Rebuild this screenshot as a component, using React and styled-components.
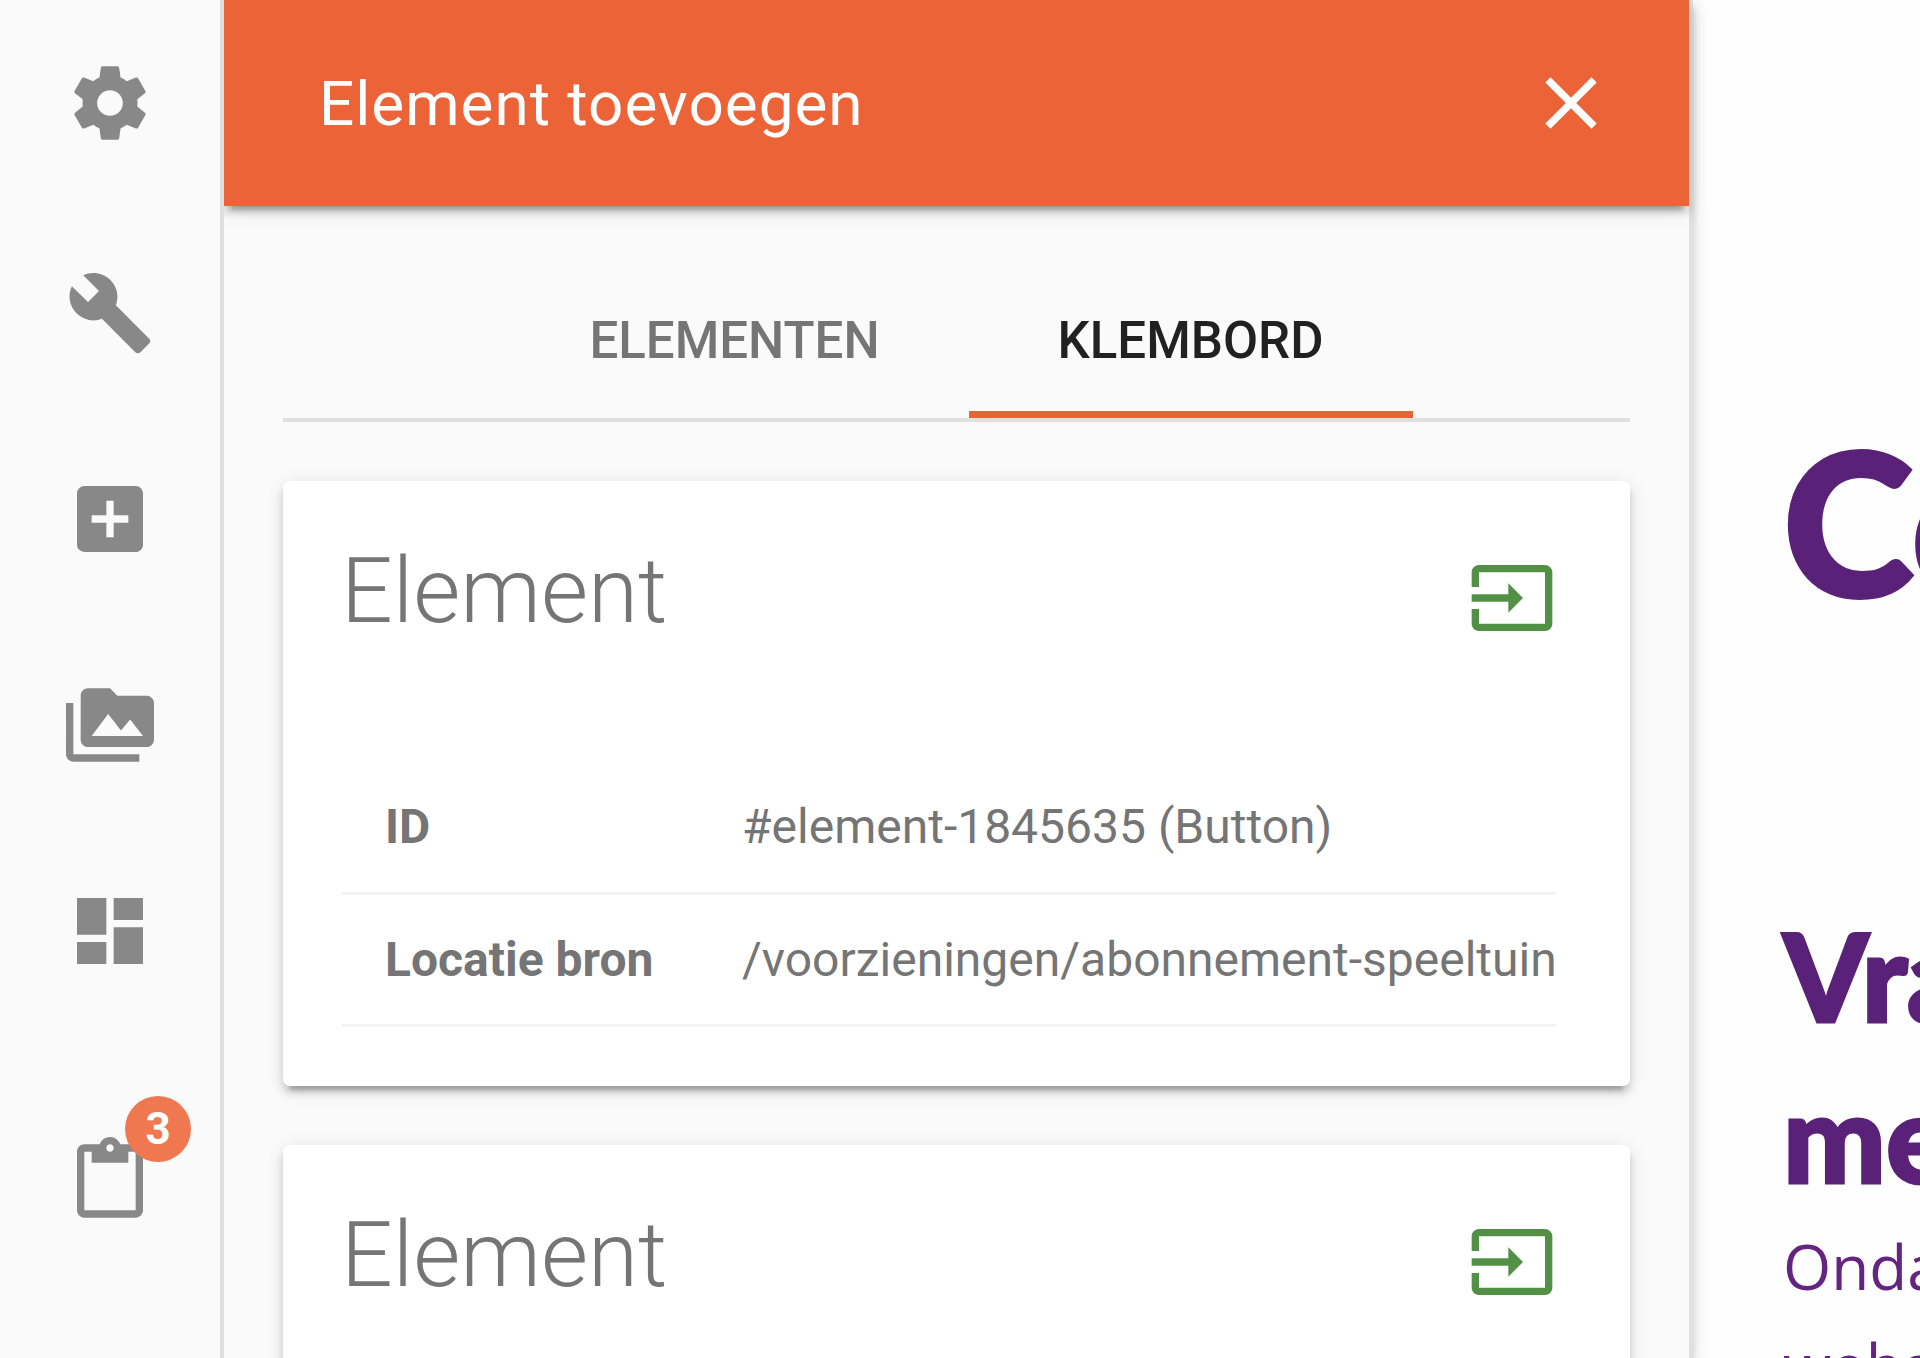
import React, { useState } from 'react';
import styled, { createGlobalStyle } from 'styled-components';
import { MdBuild, MdAddBox, MdPermMedia, MdDashboard, MdContentPaste, MdClose, MdInput } from 'react-icons/md';

const GlobalStyle = createGlobalStyle`
  * {
    box-sizing: border-box;
  }

  html, body, #root {
    height: 100%;
  }

  body {
    margin: 0;
    overflow: hidden;
    font-family: Roboto, sans-serif;
    color: #757575;
    background-color: #fefefe;
  }
`;

const elevation = `
  box-shadow: 0 7px 7px 0 rgba(0, 0, 0, 0.14), 0 11px 4px -7px rgba(0, 0, 0, 0.2), 0 4px 18px 0 rgba(0, 0, 0, 0.12);
`;

const PageContainer = styled.div`
  display: flex;
  height: 100vh;
  overflow: hidden;
`;

const Sidebar = styled.nav`
  display: flex;
  flex-direction: column;
  flex: none;
  width: 224px;
  background-color: #fafafa;
  border-right: 4px solid #e0e0e0;
`;

const SidebarButton = styled.button`
  display: flex;
  align-items: center;
  justify-content: center;
  flex: none;
  height: 206px;
  margin: ${props => props.$margin || '0'};
  padding: 0;
  border: none;
  background: none;
  color: #888;
  font-size: 88px;
  cursor: pointer;
`;

const IconWrapper = styled.span`
  position: relative;
  display: flex;
`;

const Badge = styled.span`
  position: absolute;
  top: -41px;
  right: -37px;
  width: 66px;
  height: 66px;
  border-radius: 50%;
  background-color: #f07850;
  color: white;
  font-family: Roboto, sans-serif;
  font-size: 44px;
  font-weight: bold;
  line-height: 66px;
  text-align: center;
`;

const Panel = styled.section`
  position: relative;
  display: flex;
  flex-direction: column;
  flex: 1;
  min-width: 0;
  background-color: #fafafa;
  border-right: 4px solid #e0e0e0;
  ${elevation}
  clip-path: inset(0 -40px 0 0);
`;

const PanelHeader = styled.header`
  display: flex;
  align-items: center;
  justify-content: space-between;
  flex: none;
  height: 206px;
  padding: 0 74px 0 95px;
  background-color: #ec6337;
  color: white;
  ${elevation}
`;

const PanelTitle = styled.h1`
  margin: 0;
  font-size: 62px;
  font-weight: 400;
  letter-spacing: 1px;
`;

const IconButton = styled.button`
  display: flex;
  padding: 0;
  border: none;
  background: none;
  color: ${props => props.$color};
  font-size: 88px;
  cursor: pointer;
`;

const PanelBody = styled.div`
  display: flex;
  flex-direction: column;
  gap: 59px;
  padding: 37px 59px 0;
`;

const Tabs = styled.div`
  display: flex;
  justify-content: center;
  height: 179px;
  border-bottom: 4px solid #e0e0e0;
`;

const Tab = styled.button`
  padding: 26px 89px 0;
  border: none;
  border-bottom: 7px solid ${props => (props.$active ? '#ec6337' : 'transparent')};
  background: none;
  color: ${props => (props.$active ? '#212121' : '#757575')};
  font-family: Roboto, sans-serif;
  font-size: 51px;
  font-weight: 500;
  text-transform: uppercase;
  cursor: pointer;
`;

const Card = styled.article`
  flex: none;
  height: 605px;
  padding: 59px 74px 59px 58px;
  border-radius: 7px;
  background-color: white;
  ${elevation}
`;

const CardHeader = styled.div`
  display: flex;
  align-items: flex-end;
  justify-content: space-between;
  height: 102px;
  margin-bottom: 119px;
`;

const CardTitle = styled.h2`
  margin: 0;
  font-size: 91px;
  font-weight: 300;
  line-height: 102px;
`;

const DetailTable = styled.table`
  width: 100%;
  border-collapse: collapse;
  table-layout: fixed;
  font-size: 48px;
`;

const DetailRow = styled.tr`
  height: 132px;
  border-bottom: 3px solid #f4f4f4;
`;

const DetailLabel = styled.th`
  width: 401px;
  padding: 0 0 0 44px;
  text-align: left;
  font-weight: bold;
`;

const DetailValue = styled.td`
  padding: 0;
  white-space: nowrap;
`;

const Preview = styled.main`
  flex: none;
  width: 227px;
  padding: 401px 0 0 90px;
  overflow: hidden;
  color: #592178;
  font-family: 'Lato Black', Lato, sans-serif;
  white-space: nowrap;
`;

const PreviewTitle = styled.h1`
  margin: 0 0 256px;
  font-size: 198px;
  font-weight: 900;
  line-height: 238px;
  -webkit-text-stroke: 4px #592178;
`;

const PreviewSubtitle = styled.h2`
  margin: 0;
  font-size: 122px;
  font-weight: 900;
  line-height: 161px;
  -webkit-text-stroke: 3px #592178;
`;

const PreviewText = styled.p`
  margin: 0;
  color: #642580;
  font-family: 'Open Sans', sans-serif;
  font-size: 62px;
  line-height: 99px;
`;

const SettingsIcon = () => (
  <svg width="1em" height="1em" viewBox="0 0 24 24" fill="currentColor" aria-hidden="true">
    <path d="M12 15.5A3.5 3.5 0 0 1 8.5 12 3.5 3.5 0 0 1 12 8.5a3.5 3.5 0 0 1 3.5 3.5 3.5 3.5 0 0 1-3.5 3.5m7.43-2.53c.04-.32.07-.64.07-.97s-.03-.66-.07-1l2.11-1.63c.19-.15.24-.42.12-.64l-2-3.46c-.12-.22-.39-.31-.61-.22l-2.49 1c-.52-.39-1.06-.73-1.69-.98l-.37-2.65A.506.506 0 0 0 14 2h-4c-.25 0-.46.18-.5.42l-.37 2.65c-.63.25-1.17.59-1.69.98l-2.49-1c-.22-.09-.49 0-.61.22l-2 3.46c-.13.22-.07.49.12.64L4.57 11c-.04.34-.07.67-.07 1s.03.65.07.97l-2.11 1.66c-.19.15-.25.42-.12.64l2 3.46c.12.22.39.3.61.22l2.49-1.01c.52.4 1.06.74 1.69.99l.37 2.65c.04.24.25.42.5.42h4c.25 0 .46-.18.5-.42l.37-2.65c.63-.26 1.17-.59 1.69-.99l2.49 1.01c.22.08.49 0 .61-.22l2-3.46c.12-.22.07-.49-.12-.64z" />
  </svg>
);

const clipboardItems = [
  { key: 1, title: 'Element', id: '#element-1845635 (Button)', source: '/voorzieningen/abonnement-speeltuin' },
  { key: 2, title: 'Element' }
];

const ClipboardCard = ({ item }) => (
  <Card>
    <CardHeader>
      <CardTitle>{item.title}</CardTitle>
      <IconButton $color="#529045" aria-label="Invoegen"><MdInput /></IconButton>
    </CardHeader>
    {item.id && (
      <DetailTable>
        <tbody>
          <DetailRow>
            <DetailLabel scope="row">ID</DetailLabel>
            <DetailValue>{item.id}</DetailValue>
          </DetailRow>
          <DetailRow>
            <DetailLabel scope="row">Locatie bron</DetailLabel>
            <DetailValue>{item.source}</DetailValue>
          </DetailRow>
        </tbody>
      </DetailTable>
    )}
  </Card>
);

const App = () => {
  const [activeTab, setActiveTab] = useState('Klembord');

  return (
    <PageContainer>
      <GlobalStyle />
      <Sidebar>
        <SidebarButton $margin="0 0 4px" aria-label="Instellingen"><SettingsIcon /></SidebarButton>
        <SidebarButton aria-label="Beheer"><MdBuild /></SidebarButton>
        <SidebarButton aria-label="Toevoegen"><MdAddBox /></SidebarButton>
        <SidebarButton aria-label="Media"><MdPermMedia /></SidebarButton>
        <SidebarButton aria-label="Dashboard"><MdDashboard /></SidebarButton>
        <SidebarButton $margin="44px 0 0" aria-label="Klembord">
          <IconWrapper>
            <MdContentPaste />
            <Badge>3</Badge>
          </IconWrapper>
        </SidebarButton>
      </Sidebar>

      <Panel>
        <PanelHeader>
          <PanelTitle>Element toevoegen</PanelTitle>
          <IconButton $color="white" aria-label="Sluiten"><MdClose /></IconButton>
        </PanelHeader>
        <PanelBody>
          <Tabs role="tablist">
            {['Elementen', 'Klembord'].map(tab => (
              <Tab
                key={tab}
                role="tab"
                aria-selected={activeTab === tab}
                $active={activeTab === tab}
                onClick={() => setActiveTab(tab)}
              >
                {tab}
              </Tab>
            ))}
          </Tabs>
          {clipboardItems.map(item => (
            <ClipboardCard key={item.key} item={item} />
          ))}
        </PanelBody>
      </Panel>

      <Preview>
        <PreviewTitle>Co</PreviewTitle>
        <PreviewSubtitle>Vra<br />me</PreviewSubtitle>
        <PreviewText>Onda<br />webs</PreviewText>
      </Preview>
    </PageContainer>
  );
};

export default App;
